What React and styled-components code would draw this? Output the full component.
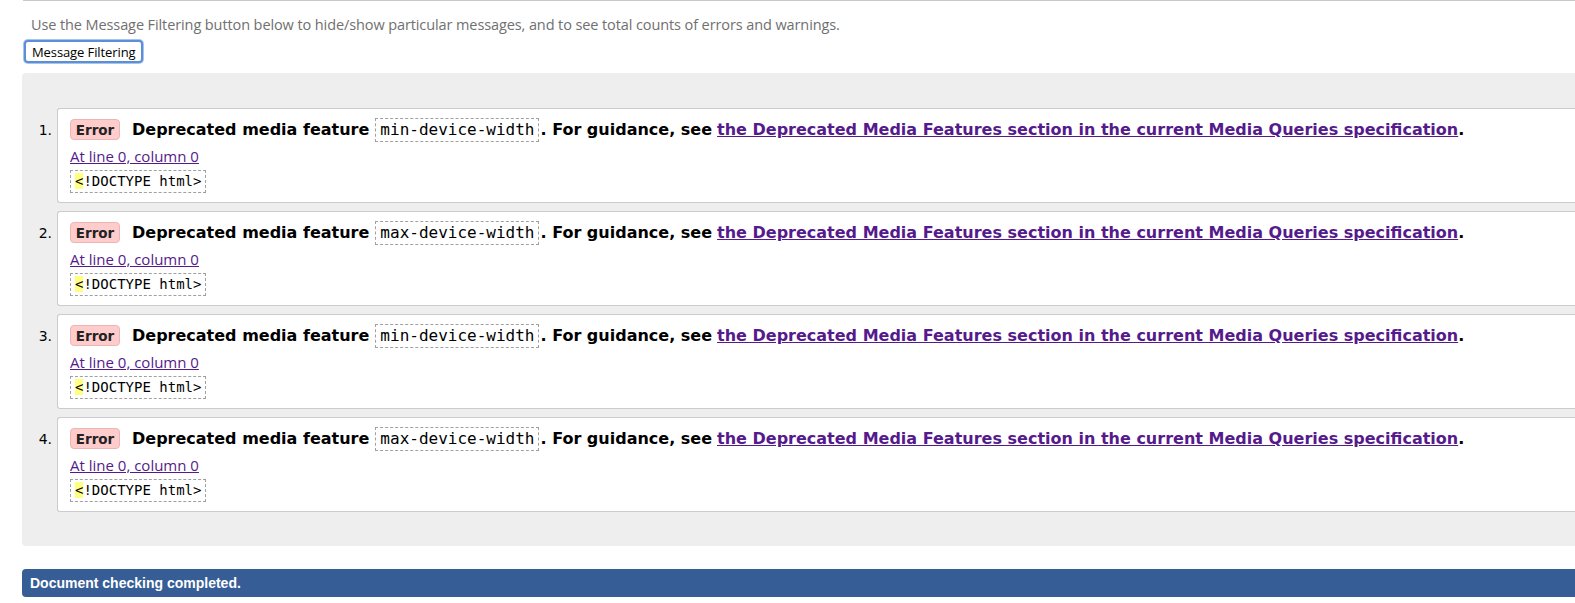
import React from "react";
import styled, { createGlobalStyle } from "styled-components";

const Global = createGlobalStyle`
  html, body { margin: 0; padding: 0; background: #fff; overflow: hidden; }
  body { width: 1575px; height: 603px; }
`;

const Page = styled.div`
  padding-left: 22px;
  font-family: "Open Sans", "DejaVu Sans", sans-serif;
  width: 1700px;
`;

const TopRule = styled.div`
  margin-left: 1px;
  border-top: 1px solid #c8c8c8;
  height: 0;
`;

const Intro = styled.p`
  margin: 14px 0 0 9px;
  font-size: 14.5px;
  line-height: 20px;
  color: #707070;
  letter-spacing: -0.1px;
`;

const FilterButton = styled.button`
  display: block;
  margin: 5px 0 0 2px;
  height: 23px;
  padding: 0 6px;
  font-family: "Open Sans", sans-serif;
  font-size: 13px;
  color: #000;
  background: #fff;
  border: 2px solid #5b8fd8;
  border-radius: 4px;
  box-shadow: 0 0 0 1px #a9c4ea;
  letter-spacing: -0.1px;
`;

const Panel = styled.div`
  margin-top: 10px;
  background: #eeeeee;
  border-radius: 4px 0 0 4px;
  padding: 35px 0 34px 0;
`;

const List = styled.ol`
  margin: 0;
  padding: 0 0 0 35px;
  list-style: none;
  display: flex;
  flex-direction: column;
  gap: 8px;
`;

const Item = styled.li`
  position: relative;
  background: #fff;
  border: 1px solid #cccccc;
  border-right: none;
  border-radius: 3px 0 0 3px;
  padding: 10px 0 10px 12px;
  height: 95px;
  box-sizing: border-box;
`;

const Num = styled.span`
  position: absolute;
  right: calc(100% + 6px);
  top: 13px;
  font-family: "DejaVu Sans", sans-serif;
  font-size: 14px;
  color: #000;
`;

const Heading = styled.div`
  display: flex;
  align-items: center;
  height: 21px;
  font-family: "DejaVu Sans", sans-serif;
  font-weight: bold;
  font-size: 16px;
  color: #000;
  white-space: nowrap;
`;

const Badge = styled.span`
  display: inline-flex;
  align-items: center;
  justify-content: center;
  box-sizing: border-box;
  width: 50px;
  height: 21px;
  margin-right: 12px;
  background: #ffcccc;
  border: 1px solid #ebb5b5;
  border-radius: 4px;
  font-size: 13.5px;
  color: #222;
`;

const Code = styled.code`
  font-family: "DejaVu Sans Mono", monospace;
  font-weight: normal;
  font-size: 16px;
  border: 1px dashed #a0a0a0;
  padding: 2px 4px;
  margin: 0 1px 0 6px;
  line-height: 18px;
`;

const SpecLink = styled.a`
  color: #551a8b;
  text-decoration: underline;
  margin-left: 5px;
`;

const Location = styled.a`
  display: block;
  width: fit-content;
  margin-top: 7px;
  font-size: 15px;
  line-height: 18px;
  color: #551a8b;
  text-decoration: underline;
`;

const ExtractCode = styled.code`
  display: block;
  width: fit-content;
  margin-top: 5px;
  font-family: "DejaVu Sans Mono", monospace;
  font-size: 14px;
  line-height: 17px;
  border: 1px dashed #a0a0a0;
  padding: 2px 4px 2px 4px;
  color: #000;
`;

const Mark = styled.mark`
  background: #ffff80;
  color: #000;
`;

const StatusBar = styled.div`
  margin-top: 23px;
  height: 28px;
  display: flex;
  align-items: center;
  padding-left: 8px;
  background: #365d95;
  border-radius: 4px 0 0 4px;
  color: #fff;
  font-family: "Liberation Sans", Arial, sans-serif;
  font-weight: bold;
  font-size: 14px;
`;

const features = ["min-device-width", "max-device-width", "min-device-width", "max-device-width"];

export default function App() {
  return (
    <>
      <Global />
      <Page>
        <TopRule />
        <Intro>
          Use the Message Filtering button below to hide/show particular messages, and to see total counts of errors and warnings.
        </Intro>
        <FilterButton>Message Filtering</FilterButton>
        <Panel>
          <List>
            {features.map((f, i) => (
              <Item key={i}>
                <Num>{i + 1}.</Num>
                <Heading>
                  <Badge>Error</Badge>
                  Deprecated media feature
                  <Code>{f}</Code>. For guidance, see
                  <SpecLink href="#">
                    the Deprecated Media Features section in the current Media Queries specification
                  </SpecLink>
                  .
                </Heading>
                <Location href="#">At line 0, column 0</Location>
                <ExtractCode>
                  <Mark>&lt;</Mark>!DOCTYPE html&gt;
                </ExtractCode>
              </Item>
            ))}
          </List>
        </Panel>
        <StatusBar>Document checking completed.</StatusBar>
      </Page>
    </>
  );
}
